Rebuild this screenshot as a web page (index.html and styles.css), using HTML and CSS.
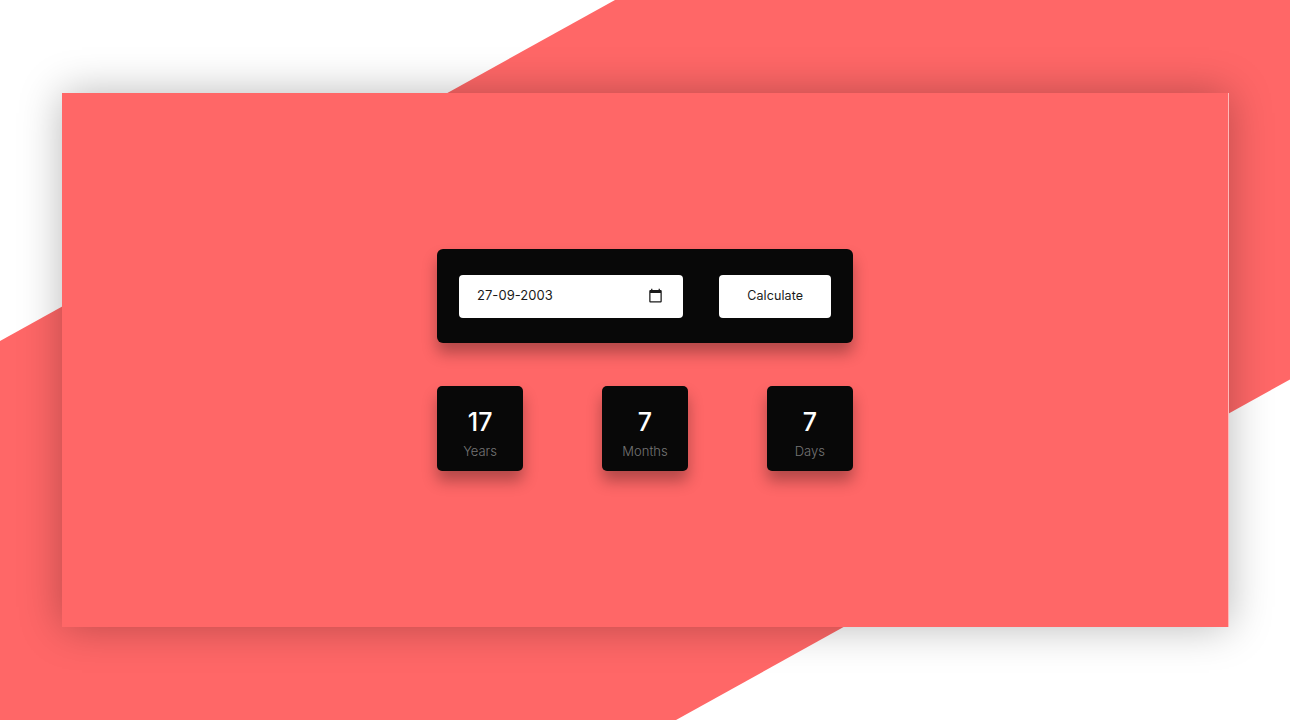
FILE: index.html
```html
<!DOCTYPE html>
<html lang="en">
<head>
    <meta charset="UTF-8">
    <meta name="viewport" content="width=device-width, initial-scale=1.0">
    <title>Age Calculator</title>
    <link rel="stylesheet" href="styles.css">
</head>
<body>
    <!-- Diagonal band behind the panel -->
    <div class="band"></div>

    <div class="panel">
        <div class="calculator">
            <div class="inputs">
                <div class="date-field">
                    <input class="date-input" type="text" value="27-09-2003">
                    <svg class="date-icon" viewBox="0 0 24 24" aria-hidden="true">
                        <path d="M20 3h-1V1h-2v2H7V1H5v2H4c-1.1 0-2 .9-2 2v16c0 1.1.9 2 2 2h16c1.1 0 2-.9 2-2V5c0-1.1-.9-2-2-2zm0 18H4V8h16v13z"/>
                    </svg>
                </div>
                <button class="calc-btn">Calculate</button>
            </div>

            <div class="outputs">
                <div class="stat">
                    <span class="stat-value">17</span>
                    <span class="stat-label">Years</span>
                </div>
                <div class="stat">
                    <span class="stat-value">7</span>
                    <span class="stat-label">Months</span>
                </div>
                <div class="stat">
                    <span class="stat-value">7</span>
                    <span class="stat-label">Days</span>
                </div>
            </div>
        </div>
    </div>
</body>
</html>
```

FILE: styles.css
```css
* {
    box-sizing: border-box;
}

body {
    font-family: Inter, "Noto Sans", sans-serif;
    display: flex;
    justify-content: center;
    align-items: center;
    height: 100vh;
    margin: 0;
    background-color: #ffffff;
    position: relative;
    overflow: hidden;
}

.band {
    position: absolute;
    top: 0;
    left: 0;
    width: 100%;
    height: 100%;
    background-color: #ff6767;
    clip-path: polygon(615px 0, 1290px 0, 1290px 379.5px, 676px 720px, 0 720px, 0 341px);
}

.panel {
    display: flex;
    justify-content: center;
    align-items: center;
    width: 1167px;
    height: 534px;
    margin-left: 1px;
    background-color: #ff6767;
    border-right: 1px solid #ffb9b9;
    box-shadow: 0 0 40px rgba(0, 0, 0, 0.28);
    position: relative;
    z-index: 1;
}

.calculator {
    display: flex;
    flex-direction: column;
    gap: 43px;
    width: 415.4px;
}

.inputs {
    display: flex;
    justify-content: space-between;
    height: 94px;
    padding: 26px 21.5px 25px 21.3px;
    background-color: #080808;
    border-radius: 6px;
    box-shadow: 0 10px 15px rgba(0, 0, 0, 0.3);
}

.date-field {
    display: flex;
    align-items: center;
    justify-content: space-between;
    width: 224px;
    padding: 0 19.5px 0 18.4px;
    background-color: #ffffff;
    border-radius: 4px;
}

.date-input {
    width: 120px;
    padding: 0 0 2px;
    border: none;
    outline: none;
    background: none;
    font-family: inherit;
    font-size: 13px;
    color: #1a1a1a;
    letter-spacing: 0.05px;
}

.date-icon {
    width: 15px;
    height: 15px;
    margin-bottom: 2px;
    fill: #1a1a1a;
}

.calc-btn {
    width: 112px;
    padding: 0 0 1px;
    border: none;
    border-radius: 4px;
    background-color: #ffffff;
    font-family: inherit;
    font-size: 12.5px;
    font-weight: 400;
    letter-spacing: 0.1px;
    color: #1a1a1a;
    cursor: pointer;
}

.outputs {
    display: flex;
    justify-content: space-between;
}

.stat {
    display: flex;
    flex-direction: column;
    align-items: center;
    width: 85.6px;
    height: 85.6px;
    padding-top: 21px;
    background-color: #080808;
    border-radius: 5px;
    box-shadow: 0 10px 15px rgba(0, 0, 0, 0.3);
}

.stat-value {
    font-size: 25px;
    font-weight: 500;
    line-height: 30px;
    color: #ffffff;
}

.stat-label {
    margin-top: 5px;
    font-size: 13px;
    font-weight: 300;
    line-height: 18px;
    color: #757575;
}
```
